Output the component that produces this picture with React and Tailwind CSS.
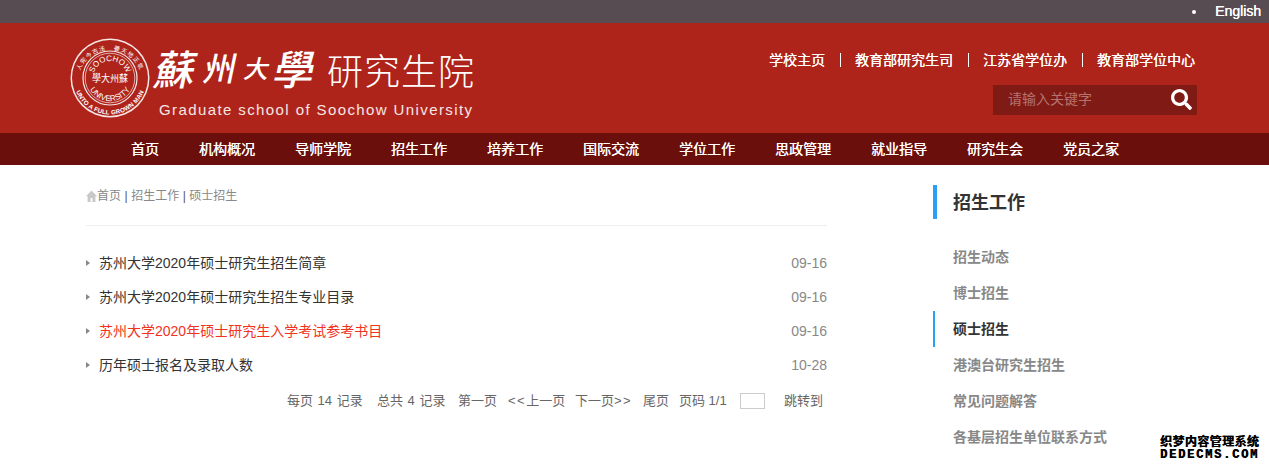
import React from "react";
import { FaSearch } from "react-icons/fa";

const F = { fontFamily: '"Liberation Sans", "Noto Sans CJK SC", sans-serif' };

function Seal() {
  return (
    <svg width="80" height="80" viewBox="0 0 80 80" className="shrink-0">
      <defs>
        <path id="sealTop" d="M 8 44 A 32 32 0 0 1 72 44" />
        <path id="sealBottom" d="M 3.5 40 A 36.5 36.5 0 0 0 76.5 40" />
        <path id="sealIn1" d="M 23 40 A 17 17 0 0 1 57 40" />
        <path id="sealIn2" d="M 17 40 A 23 23 0 0 0 63 40" />
      </defs>
      <circle cx="40" cy="40" r="39.5" fill="#f8e6e4" />
      <circle cx="40" cy="40" r="38" fill="#ae241b" />
      <circle cx="40" cy="40" r="27" fill="none" stroke="#f8e6e4" strokeWidth="1.2" />
      <circle cx="40" cy="40" r="24.8" fill="none" stroke="#f8e6e4" strokeWidth="0.7" />
      <text fontSize="6" fill="#fff" fontFamily="Noto Sans CJK TC" letterSpacing="1">
        <textPath href="#sealTop" startOffset="50%" textAnchor="middle">人完今古法　養天地正氣</textPath>
      </text>
      <text fontSize="6.2" fill="#fff" fontFamily="Liberation Sans" fontWeight="700" letterSpacing="0.2">
        <textPath href="#sealBottom" startOffset="50%" textAnchor="middle">UNTO A FULL GROWN MAN</textPath>
      </text>
      <text fontSize="8" fill="#fff" fontFamily="Liberation Sans">
        <textPath href="#sealIn1" startOffset="50%" textAnchor="middle">SOOCHOW</textPath>
      </text>
      <text x="40" y="44" textAnchor="middle" fontSize="10" fill="#fff" fontFamily="Noto Sans CJK TC" textLength="36" lengthAdjust="spacingAndGlyphs">學大州蘇</text>
      <text fontSize="8" fill="#fff" fontFamily="Liberation Sans">
        <textPath href="#sealIn2" startOffset="50%" textAnchor="middle">UNIVERSITY</textPath>
      </text>
    </svg>
  );
}

function Logo() {
  const cal = { fontFamily: '"Noto Sans CJK TC", sans-serif' };
  return (
    <div className="flex items-center gap-[6px]">
      <Seal />
      <div className="flex flex-col">
        <div className="flex items-center h-[56px] pt-[4px]">
          <div className="w-[171px] flex items-center text-white leading-none -skew-x-12 whitespace-nowrap font-medium" style={cal}>
            <span className="text-[41px] mr-[7px]">蘇</span>
            <span className="text-[33px] mr-[8px]">州</span>
            <span className="text-[25px] mr-[5px]">大</span>
            <span className="text-[41px]">學</span>
          </div>
          <span className="text-white text-[36px] font-light leading-none tracking-[1px] whitespace-nowrap mt-[2px]" style={{ fontFamily: '"Noto Sans CJK SC", sans-serif' }}>研究生院</span>
        </div>
        <div className="text-[#f7e6e4] text-[15px] leading-[18px] tracking-[1.4px] pl-[3px] mt-[7px] whitespace-nowrap">Graduate school of Soochow University</div>
      </div>
    </div>
  );
}

const nav = ["首页", "机构概况", "导师学院", "招生工作", "培养工作", "国际交流", "学位工作", "思政管理", "就业指导", "研究生会", "党员之家"];
const top = ["学校主页", "教育部研究生司", "江苏省学位办", "教育部学位中心"];
const rows = [
  ["苏州大学2020年硕士研究生招生简章", "09-16"],
  ["苏州大学2020年硕士研究生招生专业目录", "09-16"],
  ["苏州大学2020年硕士研究生入学考试参考书目", "09-16", true],
  ["历年硕士报名及录取人数", "10-28"],
];
const side = ["招生动态", "博士招生", "硕士招生", "港澳台研究生招生", "常见问题解答", "各基层招生单位联系方式"];

export default function App() {
  return (
    <div className="relative h-[470px] w-full overflow-hidden bg-white" style={F}>
      <div className="h-[23px] bg-[#564c52] flex items-center justify-end pr-[8px] text-white text-[14px] [text-shadow:0.3px_0_0_#fff]">
        <span className="w-[4px] h-[4px] rounded-full bg-white mr-[19px]" />
        <span>English</span>
      </div>

      <div className="h-[110px] bg-[#ae241b] flex items-center justify-between pl-[70px] pr-[72px]">
        <Logo />
        <div className="flex flex-col items-end gap-[17px] mt-[10px]">
          <div className="flex items-center text-white text-[14px] leading-[16px] whitespace-nowrap mr-[2px] [text-shadow:0.3px_0_0_#fff]">
            {top.map((t, i) => (
              <React.Fragment key={t}>
                {i > 0 && <span className="w-px h-[14px] bg-white ml-[15px] mr-[14px]" />}
                <span>{t}</span>
              </React.Fragment>
            ))}
          </div>
          <div className="w-[204px] h-[30px] bg-[#801a15] flex items-center justify-between pl-[15px] pr-[5px]">
            <span className="text-[14px] text-[#b5736e]">请输入关键字</span>
            <FaSearch className="text-white text-[21px]" />
          </div>
        </div>
      </div>

      <div className="h-[32px] bg-[#6b0f0c] flex items-center gap-10 pl-[131px] text-white text-[14px] whitespace-nowrap [text-shadow:0.3px_0_0_#fff]">
        {nav.map((n) => <span key={n}>{n}</span>)}
      </div>

      <div className="flex pl-[86px] pt-[20px]">
        <div className="w-[741px] shrink-0">
          <div className="h-[40px] border-b border-[#eeeeee]">
            <div className="flex items-center h-[20px] text-[12px] text-[#888888] mt-[1px]">
              <svg width="11" height="12" viewBox="0 0 11 12" fill="#c8c8c8" className="mb-[1px]"><path d="M5.5 0.5 0 6.2h1.6V12h3V8h1.8v4h3V6.2H11z" /></svg>
              <span>首页</span>
              <span className="text-[#555555] mx-[3.5px]">|</span>
              <span>招生工作</span>
              <span className="text-[#555555] mx-[3.5px]">|</span>
              <span>硕士招生</span>
            </div>
          </div>
          <div className="pt-[20px]">
            {rows.map(([t, d, red]) => (
              <div key={t} className="h-[34px] flex items-center justify-between">
                <div className="flex items-center">
                  <span className="w-0 h-0 border-y-[3px] border-y-transparent border-l-[4px] border-l-[#888888] mr-[9px]" />
                  <span className={red ? "text-[14px] text-[#f0321e]" : "text-[14px] text-[#333333]"}>{t}</span>
                </div>
                <span className="text-[14px] text-[#888888]">{d}</span>
              </div>
            ))}
          </div>
          <div className="flex items-center text-[13px] text-[#666666] pl-[201px] mt-[2px] h-[34px] whitespace-nowrap">
            <span className="w-[90px] [word-spacing:1px]">每页 14 记录</span>
            <span className="w-[81px] [word-spacing:1px]">总共 4 记录</span>
            <span className="w-[50px]">第一页</span>
            <span className="w-[67px]"><span className="tracking-[1.5px]">&lt;&lt;</span>上一页</span>
            <span className="w-[68px]">下一页<span className="tracking-[1.5px]">&gt;&gt;</span></span>
            <span className="w-[36px]">尾页</span>
            <span className="w-[61px]">页码 1/1</span>
            <span className="w-[25px] h-[16px] border border-[#cccccc] bg-white mr-[19px]" />
            <span>跳转到</span>
          </div>
        </div>

        <div className="ml-[106px] w-[300px]">
          <div className="h-[34px] border-l-4 border-[#2aa0f5] pl-[16px] pt-[2px] flex items-center text-[18px] font-bold text-[#333333]">招生工作</div>
          <div className="mt-[20px]">
            {side.map((s, i) => (
              <div key={s} className={i === 2 ? "h-[36px] flex items-center border-l-2 border-[#2aa0f5] pl-[18px] text-[14px] font-bold text-[#333333]" : "h-[36px] flex items-center pl-[20px] text-[14px] font-bold text-[#888888]"}>{s}</div>
            ))}
          </div>
        </div>
      </div>

      <div className="absolute left-[1160px] top-[436px] w-[99px] h-[25px] bg-white text-black font-bold whitespace-nowrap [text-shadow:0.4px_0_0_#000]">
        <div className="text-[12px] leading-[13px] tracking-[0.4px]">织梦内容管理系统</div>
        <div className="text-[12px] leading-[12px] tracking-[1.8px]" style={{ fontFamily: '"Liberation Mono", monospace' }}>DEDECMS.COM</div>
      </div>
    </div>
  );
}
